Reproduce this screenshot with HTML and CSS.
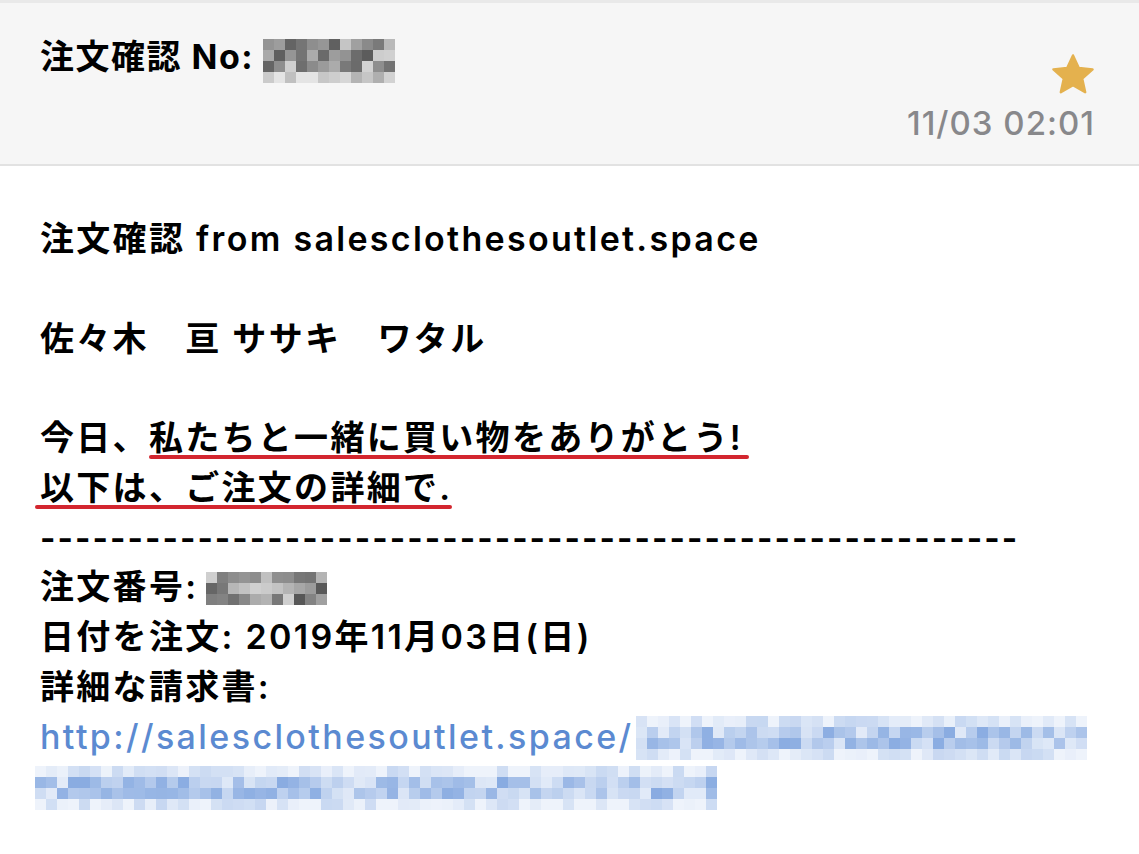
FILE: index.html
```html
<!DOCTYPE html>
<html lang="ja">
<head>
    <meta charset="UTF-8">
    <meta name="viewport" content="width=device-width, initial-scale=1.0">
    <title>注文確認</title>
    <link rel="stylesheet" href="styles.css">
</head>
<body>

    <div class="mail-header">
        <div class="subject">
            注文確認 No: <span class="mosaic gray" data-cols="12" data-rows="4" data-fade="bottom"></span>
        </div>
        <div class="meta">
            <svg class="star" viewBox="0 0 24 24" width="48" height="48">
                <path d="M12 2.2l2.9 6.3 6.9.7-5.2 4.6 1.5 6.8L12 17.1l-6.1 3.5 1.5-6.8-5.2-4.6 6.9-.7z" fill="#e4b14e" stroke="#e4b14e" stroke-width="1.2" stroke-linejoin="round"/>
            </svg>
            <div class="date">11/03 02:01</div>
        </div>
    </div>

    <div class="mail-body">
        <div class="line">注文確認 from salesclothesoutlet.space</div>
        <div class="line blank"></div>
        <div class="line">佐々木　亘 ササキ　ワタル</div>
        <div class="line blank"></div>
        <div class="line">今日、<span class="mark">私たちと一緒に買い物をありがとう!</span></div>
        <div class="line"><span class="mark wide">以下は、ご注文の詳細で.</span></div>
        <div class="line dashes">--------------------------------------------------------</div>
        <div class="line">注文番号: <span class="mosaic gray spaced" data-cols="11" data-rows="3"></span></div>
        <div class="line">日付を注文: 2019年11月03日(日)</div>
        <div class="line">詳細な請求書:</div>
        <div class="line link"><a href="#">http://salesclothesoutlet.space/</a><span class="mosaic blue" data-cols="41" data-rows="4" data-fade="both"></span></div>
        <div class="line link"><span class="mosaic blue shift" data-cols="62" data-rows="4" data-fade="both"></span></div>
    </div>

    <script src="script.js"></script>
</body>
</html>
```

FILE: styles.css
```css
body {
    margin: 0;
    font-family: 'Inter', 'Noto Sans CJK JP', sans-serif;
    background-color: #ffffff;
    color: #000000;
}

/* Header */
.mail-header {
    display: flex;
    justify-content: space-between;
    background-color: #f6f6f6;
    border-top: 3px solid #e9e9e9;
    border-bottom: 2px solid #e2e2e2;
    height: 161px;
    padding: 0 44px 0 40px;
}

.subject {
    font-size: 34px;
    font-weight: 700;
    letter-spacing: 1.5px;
    line-height: 40px;
    padding-top: 34px;
    display: flex;
    align-items: flex-start;
    gap: 9px;
}

.meta {
    display: flex;
    flex-direction: column;
    align-items: flex-end;
    padding-top: 48px;
}

.star {
    display: block;
    margin-right: -2px;
}

.date {
    font-size: 33px;
    font-weight: 500;
    color: #88888b;
    margin-top: 4px;
    letter-spacing: 1px;
}

/* Body */
.mail-body {
    padding: 48px 40px 0 40px;
    font-size: 34px;
    font-weight: 600;
    letter-spacing: 2.3px;
}

.line {
    height: 49.8px;
    line-height: 50px;
    white-space: nowrap;
    display: flex;
    align-items: center;
}

.mark {
    position: relative;
}

.mark::after {
    content: "";
    position: absolute;
    left: 0;
    right: -6px;
    bottom: 4px;
    height: 4px;
    border-radius: 2px;
    background-color: #d3262f;
}

.mark.wide::after {
    left: -5px;
    right: 0;
}

.dashes {
    font-size: 33px;
    letter-spacing: 2.05px;
    font-weight: 700;
}

.link a {
    color: #5b8ad1;
    text-decoration: none;
    font-weight: 500;
    letter-spacing: 2.4px;
}

/* Pixelated blur */
.mosaic {
    display: inline-grid;
    grid-auto-rows: 11px;
}

.mosaic.gray {
    margin-top: 2px;
}

.mosaic.spaced {
    margin-left: 8px;
}

.link .mosaic {
    margin-left: 2px;
    margin-top: 2px;
}

.link .mosaic.shift {
    margin-left: -5px;
}
```

FILE: script.js
```js
// fake pixelation for hidden numbers and links
let seed = 7;
function rnd() {
    seed = (seed * 9301 + 49297) % 233280;
    return seed / 233280;
}

const tones = {
    gray: { dark: [70, 70, 70], light: [228, 228, 228] },
    blue: { dark: [125, 163, 222], light: [238, 243, 251] }
};

// the separator: 56 dashes, like the plain text mail
document.querySelector('.dashes').textContent = '-'.repeat(56);

document.querySelectorAll('.mosaic').forEach(el => {
    const cols = Number(el.dataset.cols);
    const rows = Number(el.dataset.rows);
    const fade = el.dataset.fade || '';
    const tone = el.classList.contains('blue') ? tones.blue : tones.gray;

    el.style.gridTemplateColumns = `repeat(${cols}, 11px)`;

    for (let r = 0; r < rows; r++) {
        const faint = (fade === 'both' && (r === 0 || r === rows - 1)) ||
                      (fade === 'bottom' && r === rows - 1);
        for (let c = 0; c < cols; c++) {
            const cell = document.createElement('span');
            let t = faint ? 0.65 + rnd() * 0.35 : 0.1 + rnd() * 0.8;
            if (faint && rnd() > 0.7) t = 1;
            const mix = tone.dark.map((d, i) => Math.round(d + (tone.light[i] - d) * t));
            cell.style.background = `rgb(${mix.join(',')})`;
            el.appendChild(cell);
        }
    }
});
```
